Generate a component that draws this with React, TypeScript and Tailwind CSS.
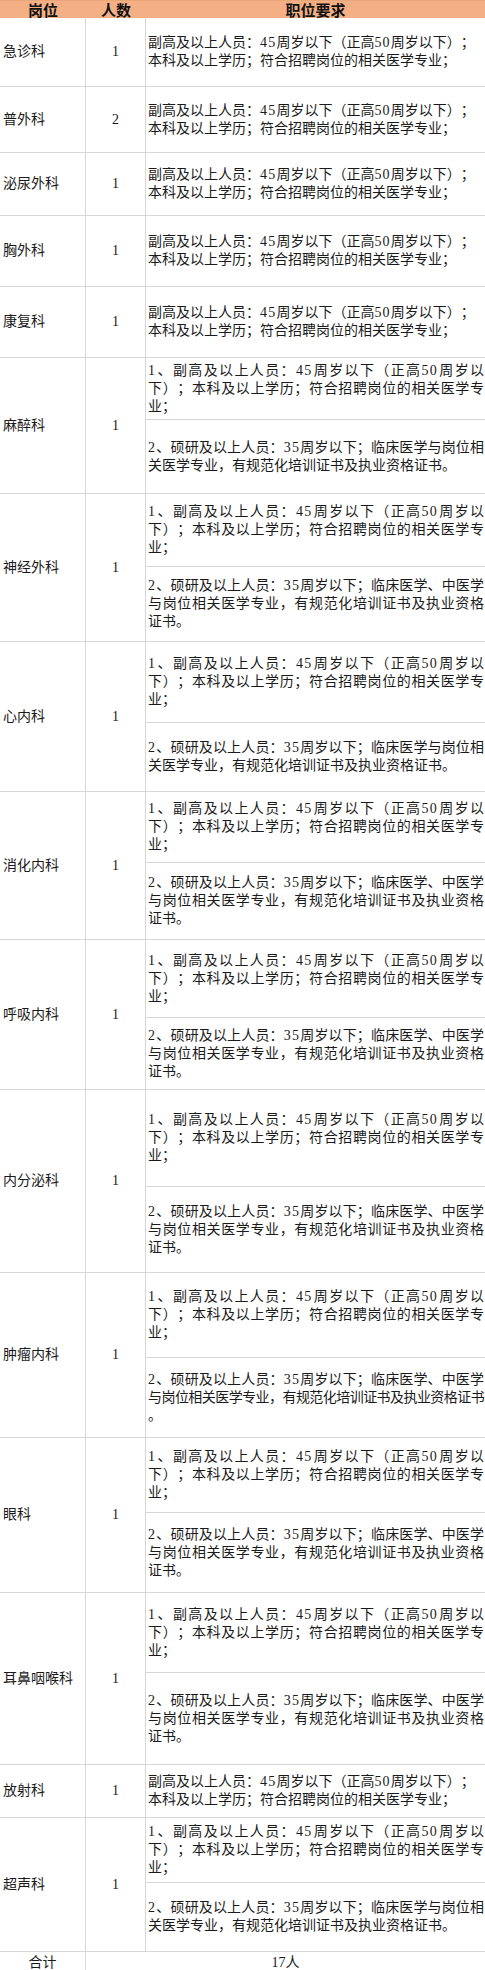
import React from 'react'

// Recruitment table: one row per department, column 3 may be split in two blocks.
type Block = { lines: string[]; justify?: boolean; tight?: number }

const plain: Block = {
  lines: ['副高及以上人员：45周岁以下（正高50周岁以下）；', '本科及以上学历；符合招聘岗位的相关医学专业；'],
}
const first: Block = {
  justify: true,
  lines: ['1、副高及以上人员：45周岁以下（正高50周岁以', '下）；本科及以上学历；符合招聘岗位的相关医学专', '业；'],
}
const second: Block = {
  justify: true,
  lines: ['2、硕研及以上人员：35周岁以下；临床医学与岗位相', '关医学专业，有规范化培训证书及执业资格证书。'],
}
const secondTcm: Block = {
  justify: true,
  lines: ['2、硕研及以上人员：35周岁以下；临床医学、中医学', '与岗位相关医学专业，有规范化培训证书及执业资格', '证书。'],
}
const secondTcmLong: Block = {
  justify: true,
  tight: 1,
  lines: ['2、硕研及以上人员：35周岁以下；临床医学、中医学', '与岗位相关医学专业，有规范化培训证书及执业资格证书', '。'],
}

interface Row {
  name: string
  count: string
  h: string
  top?: string
  blocks: Block[]
}

const rows: Row[] = [
  { name: '急诊科', count: '1', h: 'h-[69px]', blocks: [plain] },
  { name: '普外科', count: '2', h: 'h-[66px]', blocks: [plain] },
  { name: '泌尿外科', count: '1', h: 'h-[63px]', blocks: [plain] },
  { name: '胸外科', count: '1', h: 'h-[71px]', blocks: [plain] },
  { name: '康复科', count: '1', h: 'h-[71px]', blocks: [plain] },
  { name: '麻醉科', count: '1', h: 'h-[136px]', top: 'h-[62px]', blocks: [first, second] },
  { name: '神经外科', count: '1', h: 'h-[148px]', top: 'h-[73px]', blocks: [first, secondTcm] },
  { name: '心内科', count: '1', h: 'h-[150px]', top: 'h-[81px]', blocks: [first, second] },
  { name: '消化内科', count: '1', h: 'h-[148px]', top: 'h-[71px]', blocks: [first, secondTcm] },
  { name: '呼吸内科', count: '1', h: 'h-[150px]', top: 'h-[78px]', blocks: [first, secondTcm] },
  { name: '内分泌科', count: '1', h: 'h-[183px]', top: 'h-[97px]', blocks: [first, secondTcm] },
  { name: '肿瘤内科', count: '1', h: 'h-[165px]', top: 'h-[85px]', blocks: [first, secondTcmLong] },
  { name: '眼科', count: '1', h: 'h-[155px]', top: 'h-[75px]', blocks: [first, secondTcm] },
  { name: '耳鼻咽喉科', count: '1', h: 'h-[172px]', top: 'h-[80px]', blocks: [first, secondTcm] },
  { name: '放射科', count: '1', h: 'h-[53px]', blocks: [plain] },
  { name: '超声科', count: '1', h: 'h-[134px]', top: 'h-[65px]', blocks: [first, second] },
]

// digits in the source are a touch wider than Liberation Serif's
function Digits({ text }: { text: string }) {
  return (
    <>
      {text.split(/(\d+)/).map((part, i) =>
        /^\d+$/.test(part) ? (
          <span key={i} className="tracking-[1.2px]">{part}</span>
        ) : (
          <React.Fragment key={i}>{part}</React.Fragment>
        ),
      )}
    </>
  )
}

function Text({ block }: { block: Block }) {
  return (
    <div className="w-full pl-[2px] pr-[1px]">
      {block.lines.map((line, i) => {
        const last = i === block.lines.length - 1
        const cls = block.justify && !last ? 'text-justify [text-align-last:justify]' : ''
        const tight = block.tight === i ? 'tracking-[-0.7px]' : ''
        return (
          <div key={i} className={`whitespace-nowrap ${cls} ${tight}`}>
            <Digits text={line} />
          </div>
        )
      })}
    </div>
  )
}

export default function App() {
  return (
    <div
      className="w-[485px] bg-white text-[14px] leading-[18px] text-[#1a1a1a] [text-spacing-trim:space-all]"
      style={{ fontFamily: "'Liberation Serif', 'Noto Sans CJK SC', serif" }}
    >
      <div className="flex h-[18px] border-t border-[#e9a679] bg-[#f4b084] text-[15px] font-bold leading-[17px] text-[#111]">
        <div className="flex w-[86px] items-center justify-center" style={{ fontFamily: "'Noto Sans CJK SC', sans-serif" }}>岗位</div>
        <div className="flex w-[60px] items-center justify-center" style={{ fontFamily: "'Noto Sans CJK SC', sans-serif" }}>人数</div>
        <div className="flex flex-1 items-center justify-center" style={{ fontFamily: "'Noto Sans CJK SC', sans-serif" }}>职位要求</div>
      </div>

      {rows.map((r) => (
        <div key={r.name} className={`flex border-b border-[#d6d6d6] ${r.h}`}>
          <div className="flex w-[86px] shrink-0 items-center border-r border-[#d6d6d6] pl-[3px]">{r.name}</div>
          <div className="flex w-[60px] shrink-0 items-center justify-center border-r border-[#d6d6d6]">{r.count}</div>
          {r.blocks.length === 1 ? (
            <div className="flex flex-1 items-center">
              <Text block={r.blocks[0]} />
            </div>
          ) : (
            <div className="flex flex-1 flex-col">
              <div className={`flex items-center border-b border-[#d6d6d6] ${r.top}`}>
                <Text block={r.blocks[0]} />
              </div>
              <div className="flex flex-1 items-center">
                <Text block={r.blocks[1]} />
              </div>
            </div>
          )}
        </div>
      ))}

      <div className="flex h-[22px] border-b border-[#d6d6d6]">
        <div className="flex w-[86px] shrink-0 items-center justify-center border-r border-[#d6d6d6]">合计</div>
        <div className="flex flex-1 items-center justify-center">17人</div>
      </div>
    </div>
  )
}
